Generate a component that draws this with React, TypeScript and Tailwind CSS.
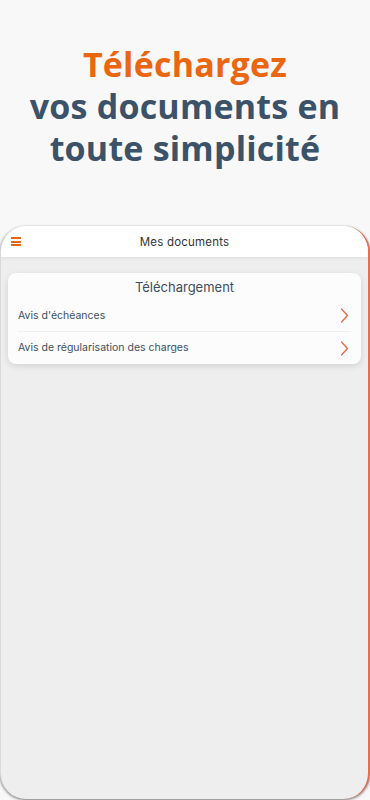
const rows = ["Avis d'échéances", 'Avis de régularisation des charges']

function Chevron() {
  return (
    <svg width="9" height="15" viewBox="0 0 9 15" fill="none" className="mr-[2px]">
      <polyline points="1.5,1 7.5,7.5 1.5,14" stroke="#f0674e" strokeWidth="1.3" strokeLinecap="round" strokeLinejoin="round" />
    </svg>
  )
}

export default function App() {
  return (
    <div className="w-[370px] h-[800px] overflow-hidden bg-[#f8f8f8] flex flex-col">
      {/* Headline */}
      <div className="pt-[43px] text-center font-bold text-[34px] leading-[42px] tracking-[0.2px]" style={{ fontFamily: '"Open Sans", sans-serif' }}>
        <div className="text-[#ea6610]">Téléchargez</div>
        <div className="text-[#3c5269]">vos documents en</div>
        <div className="text-[#3c5269]">toute simplicité</div>
      </div>

      {/* Phone */}
      <div className="mt-[57px] h-[573px] flex flex-col rounded-[26px] overflow-hidden bg-[#eeeeee] border-l border-[#d9d9d9] border-r-2 border-r-[#e07050] shadow-[0_1px_3px_rgba(0,0,0,0.55)]" style={{ fontFamily: 'Inter, "Noto Sans", sans-serif' }}>
        <div className="relative h-[31px] shrink-0 bg-white flex items-center justify-center shadow-[0_1px_3px_rgba(0,0,0,0.08)]">
          <div className="absolute left-[10px] top-[11px] flex flex-col gap-[1.5px]">
            <span className="block w-[10px] h-[2px] bg-[#ea6610]" />
            <span className="block w-[10px] h-[2px] bg-[#ea6610]" />
            <span className="block w-[10px] h-[2px] bg-[#ea6610]" />
          </div>
          <span className="pt-[2px] text-[11.5px] text-[#333] tracking-[0.2px]">Mes documents</span>
        </div>

        <div className="px-[7px] pt-[16px]">
          <div className="bg-[#fcfcfc] rounded-[8px] shadow-[0_2px_6px_rgba(0,0,0,0.12)] px-[10px]">
            <div className="h-[27px] pt-[5px] flex justify-center text-[13px] text-[#3f4d5c]">Téléchargement</div>
            {rows.map((r, i) => (
              <div key={r} className={'h-[32px] flex items-center justify-between text-[10.5px] text-[#3f5062] ' + (i === 0 ? 'border-b border-[#efefef]' : '')}>
                <span>{r}</span>
                <Chevron />
              </div>
            ))}
          </div>
        </div>
      </div>
    </div>
  )
}
